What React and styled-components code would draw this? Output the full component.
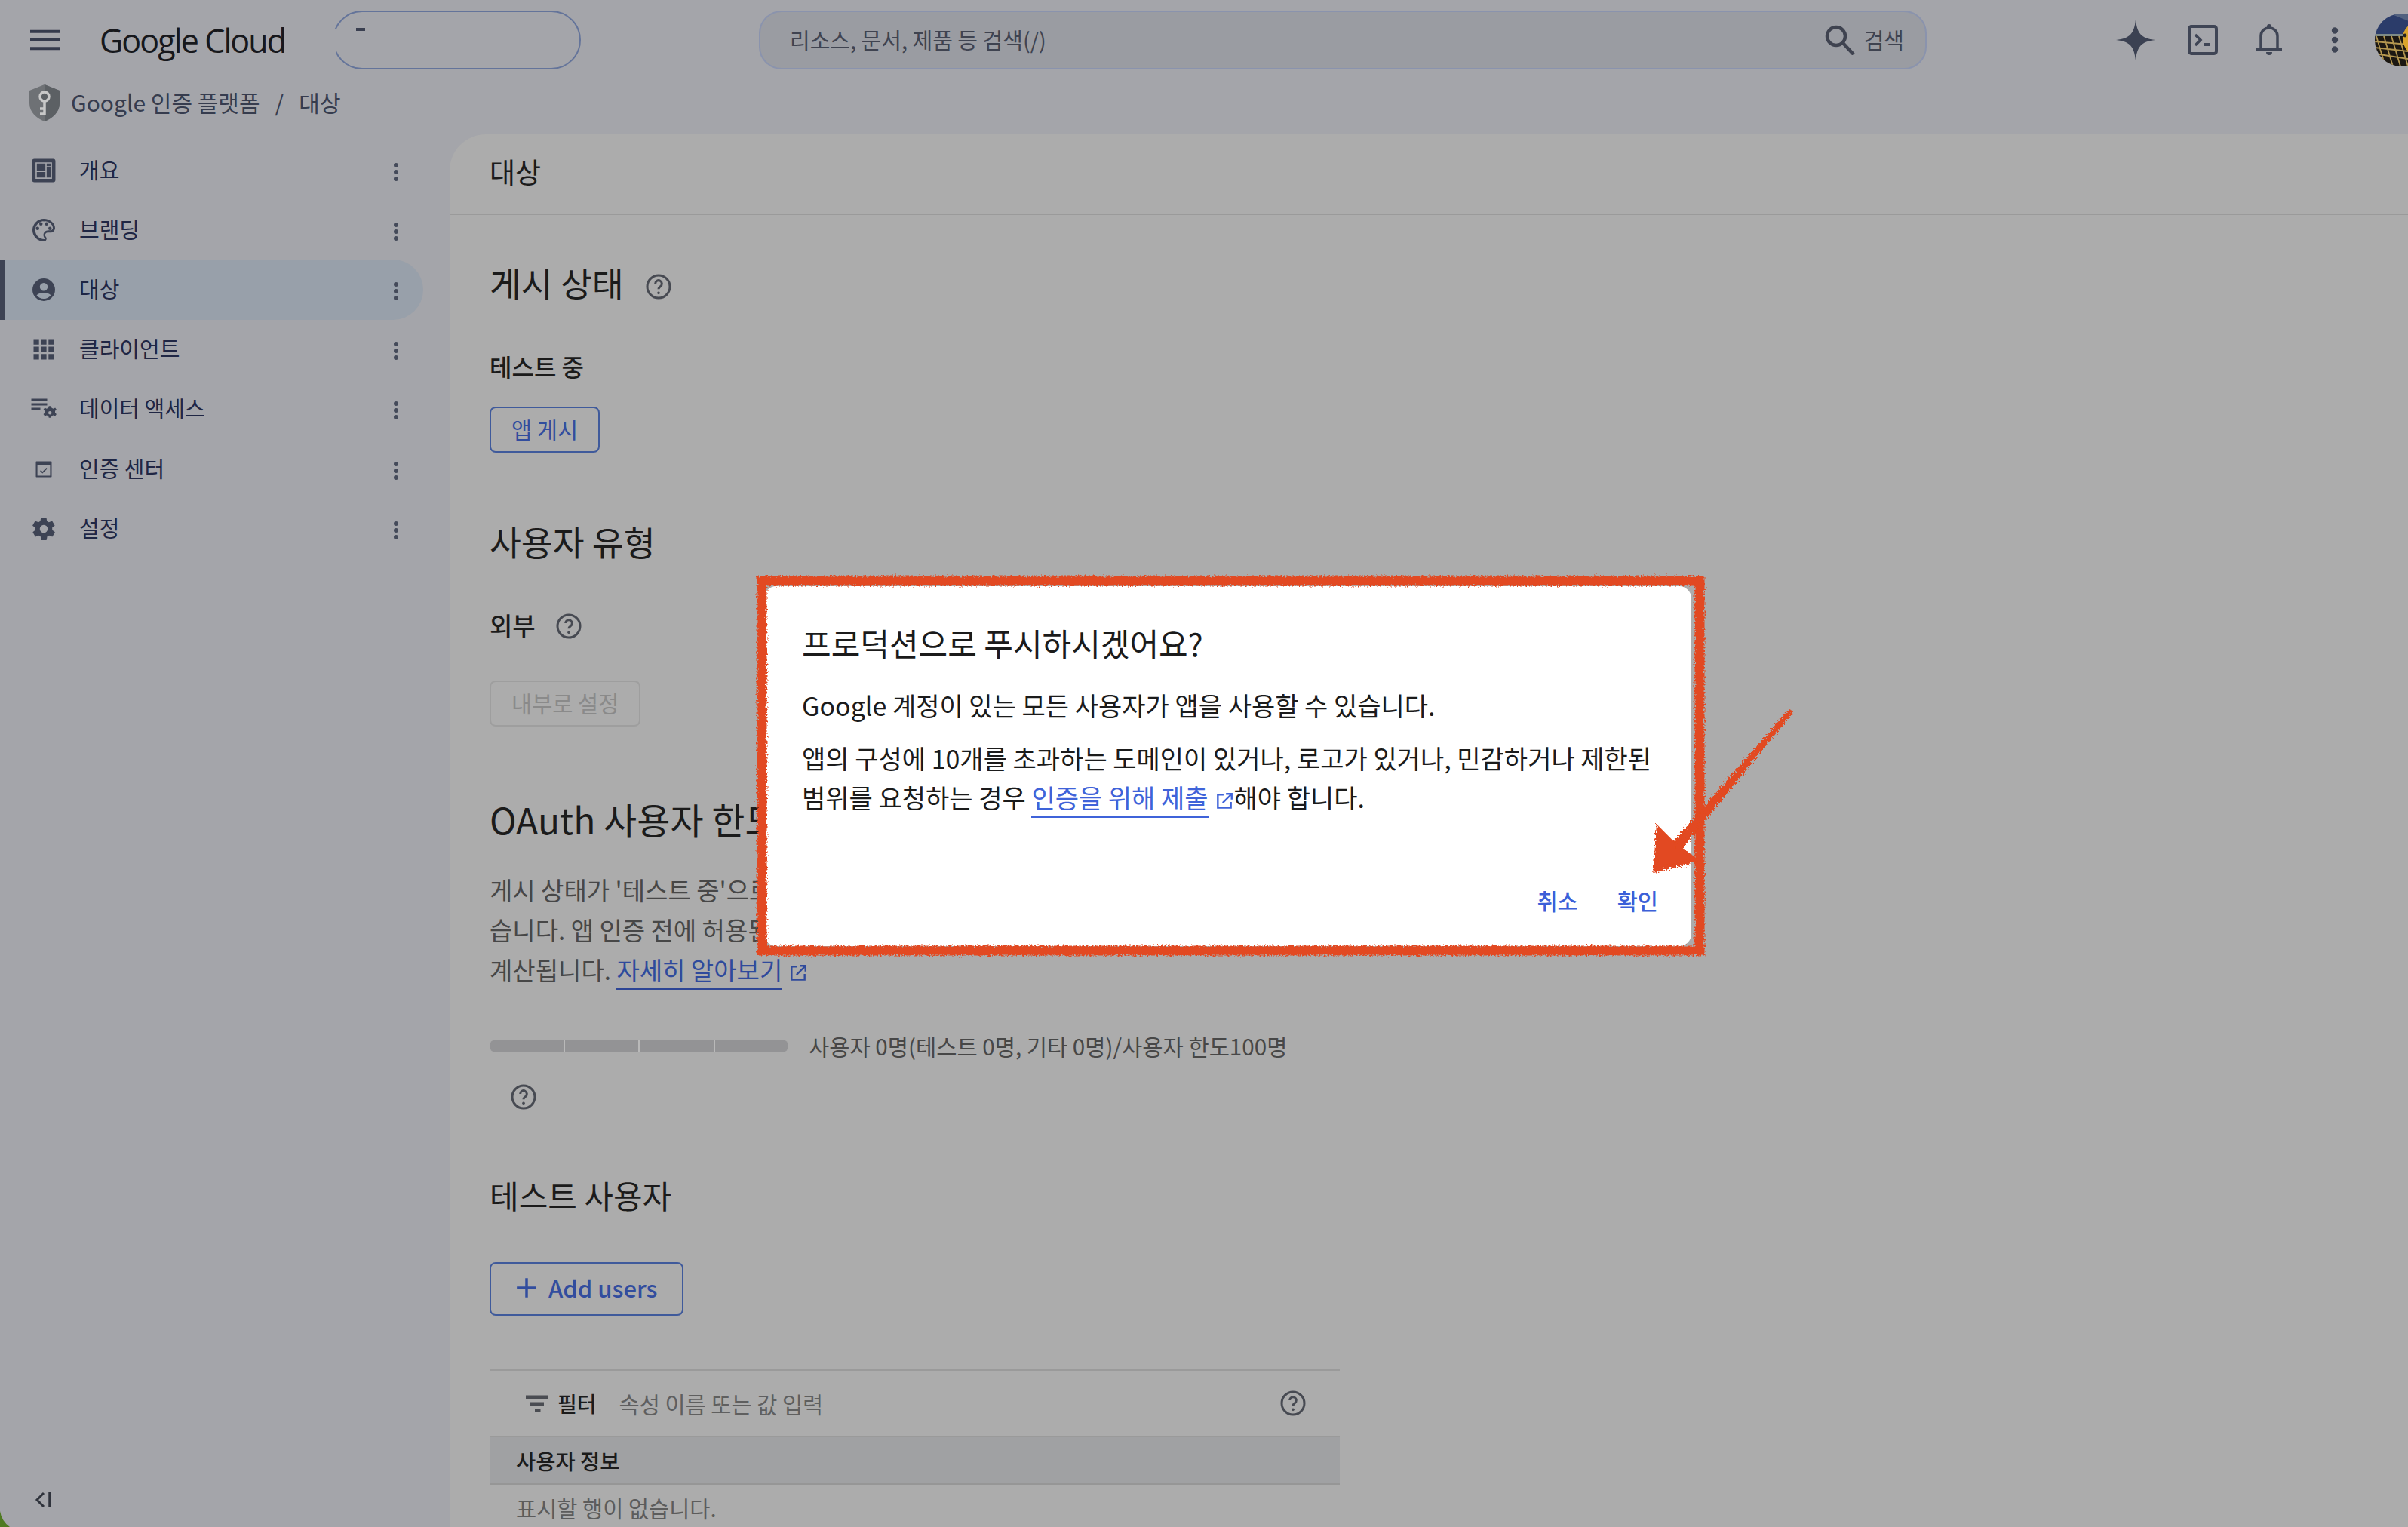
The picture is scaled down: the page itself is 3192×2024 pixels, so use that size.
import React from 'react'
import styled, { createGlobalStyle } from 'styled-components'

const GlobalStyle = createGlobalStyle`
    html, body {
        margin: 0;
        padding: 0;
        background: #a4a5aa;
    }
    body {
        font-family: "Noto Sans CJK KR", "Noto Sans", sans-serif;
        overflow: hidden;
    }
`

const Page = styled.div`
    position: relative;
    width: 3192px;
    height: 2024px;
    overflow: hidden;
    background: #a4a5aa;
    display: flex;
    flex-direction: column;
`

const TopBar = styled.header`
    display: flex;
    align-items: center;
    height: 106px;
    flex-shrink: 0;
    padding-left: 40px;
    & > * {
        flex-shrink: 0;
    }
`

const Logo = styled.div`
    margin-left: 52px;
    width: 309px;
    font-family: "Open Sans", sans-serif;
    font-size: 43px;
    letter-spacing: -1.9px;
    color: #17181c;
`

const ProjectPill = styled.div`
    position: relative;
    width: 329px;
    height: 78px;
    box-sizing: border-box;
    border: 2px solid #64749a;
    border-radius: 39px;
    &::before {
        content: '';
        position: absolute;
        left: 29px;
        top: 21px;
        width: 12px;
        height: 4px;
        background: #3a3f50;
    }
    &::after {
        content: '';
        position: absolute;
        left: -3px;
        top: 23px;
        width: 5px;
        height: 34px;
        background: #a4a5aa;
    }
`

const SearchBox = styled.div`
    margin-left: 236px;
    width: 1548px;
    height: 78px;
    box-sizing: border-box;
    display: flex;
    align-items: center;
    border: 2px solid #8a93ad;
    border-radius: 30px;
    background: #9a9ca2;
    padding: 0 28px 0 39px;
    color: #3f4350;
    font-size: 29px;
`

const SearchHint = styled.span`
    flex: 1;
    margin-top: -3px;
`

const SearchLabel = styled.span`
    margin: -3px 0 0 12px;
`

const TopIcons = styled.div`
    display: flex;
    align-items: center;
    margin-left: 251px;
    & > * {
        flex-shrink: 0;
    }
`

const TopIcon = styled.span`
    display: flex;
    margin-left: ${p => p.$left}px;
`

const Avatar = styled.svg`
    width: 70px;
    height: 70px;
    margin-left: 28px;
`

const Crumbs = styled.div`
    display: flex;
    align-items: center;
    height: 66px;
    margin-top: -3px;
    padding-left: 39px;
    color: #363c4e;
    font-size: 30px;
`

const CrumbLink = styled.span`
    margin: -2px 0 0 15px;
`

const CrumbSlash = styled.span`
    margin: -2px 20px 0;
`

const CrumbCurrent = styled.span`
    margin-top: -2px;
`

const Body = styled.div`
    display: flex;
    flex: 1;
    min-height: 0;
    margin-top: 9px;
`

const SideNav = styled.nav`
    position: relative;
    width: 596px;
    flex-shrink: 0;
    padding-top: 8px;
`

const NavRow = styled.div`
    display: flex;
    align-items: center;
    width: 561px;
    height: 79.2px;
    box-sizing: border-box;
    padding-left: 40px;
    color: #1f2644;
    font-size: 29px;
    border-radius: 0 40px 40px 0;
    ${p => p.$active && `
        background: #98a0aa;
        border-left: 6px solid #3d4354;
        padding-left: 34px;
    `}
`

const NavIcon = styled.span`
    display: flex;
    justify-content: center;
    align-items: center;
    width: 36px;
    height: 40px;
    margin-right: 29px;
`

const NavLabel = styled.span`
    flex: 1;
    margin-top: -4px;
`

const NavMore = styled.span`
    display: flex;
    margin: 4px 18px 0 0;
`

const Collapse = styled.div`
    position: absolute;
    left: 46px;
    bottom: 24px;
    display: flex;
`

const CornerLeaf = styled.svg`
    position: absolute;
    left: 0;
    bottom: 0;
    width: 13px;
    height: 21px;
`

const Panel = styled.main`
    flex: 1;
    background: #acacac;
    border-top-left-radius: 48px;
    min-width: 0;
    overflow: hidden;
`

const PanelHead = styled.div`
    height: 107px;
    box-sizing: border-box;
    border-bottom: 2px solid #9a9a9a;
    padding: 26px 0 0 53px;
    font-size: 37px;
    line-height: 46px;
    color: #1b1b1b;
`

const PanelBody = styled.div`
    padding: 59px 0 0 53px;
    width: 1127px;
`

const Section = styled.section`
    margin-bottom: ${p => p.$gap || 0}px;
`

const Heading = styled.h2`
    display: flex;
    align-items: center;
    gap: 26px;
    margin: 0;
    height: 60px;
    font-size: ${p => p.$size || 45.5}px;
    font-weight: 400;
    color: #1b1b1b;
`

const Status = styled.div`
    display: flex;
    align-items: center;
    gap: 24px;
    margin-top: ${p => p.$top}px;
    height: 44px;
    font-size: ${p => p.$size || 32}px;
    font-weight: 500;
    color: #1b1b1b;
`

const OutlineButton = styled.div`
    display: inline-flex;
    align-items: center;
    gap: ${p => p.$gap || 12}px;
    box-sizing: border-box;
    height: ${p => p.$h || 61}px;
    margin-top: ${p => p.$top || 0}px;
    padding: 0 ${p => p.$pad || 27}px 4px;
    border: 2px solid ${p => (p.$off ? '#9e9e9e' : '#3f5a9b')};
    border-radius: 8px;
    font-size: ${p => p.$size || 29.5}px;
    font-weight: ${p => p.$weight || 400};
    color: ${p => (p.$off ? '#8a8a8a' : '#324d9e')};
`

const Paragraph = styled.p`
    margin: 38px 0 0;
    width: 1400px;
    font-size: 33px;
    line-height: 53px;
    color: #474747;
    white-space: nowrap;
`

const DimLink = styled.span`
    color: #2f4a9c;
    border-bottom: 2px solid #2d4595;
    padding-bottom: 1px;
`

const LinkIcon = styled.svg`
    width: 26px;
    height: 26px;
    margin-left: 8px;
    vertical-align: -4px;
`

const Usage = styled.div`
    display: flex;
    align-items: center;
    gap: 27px;
    margin-top: 54px;
    font-size: 29.6px;
    height: 40px;
    color: #474747;
`

const Bar = styled.div`
    display: flex;
    gap: 2px;
    width: 396px;
    height: 17px;
    border-radius: 8px;
    overflow: hidden;
    background: #b9b9b9;
`

const BarPart = styled.div`
    flex: 1;
    background: #939395;
`

const UsageHelp = styled.div`
    display: flex;
    margin: 28px 0 0 25px;
`

const FilterBar = styled.div`
    display: flex;
    align-items: center;
    height: 90px;
    box-sizing: border-box;
    margin-top: 71px;
    border-top: 2px solid #9a9a9a;
    border-bottom: 2px solid #9a9a9a;
    padding: 0 42px 0 45px;
    font-size: 29.5px;
    color: #5f5f5f;
`

const FilterLabel = styled.span`
    margin: 0 30px 0 9px;
    font-size: 28px;
    font-weight: 500;
    color: #1b1b1b;
`

const FilterHint = styled.span`
    flex: 1;
`

const TableHead = styled.div`
    display: flex;
    align-items: center;
    height: 63px;
    box-sizing: border-box;
    padding-left: 35px;
    background: #a0a1a3;
    border-bottom: 2px solid #969696;
    font-size: 28.5px;
    font-weight: 500;
    color: #1b1b1b;
`

const EmptyRow = styled.div`
    padding: 10px 0 0 35px;
    font-size: 29.5px;
    line-height: 40px;
    color: #5c5c5c;
`

const Dialog = styled.div`
    position: absolute;
    left: 1013px;
    top: 777px;
    width: 1229px;
    height: 477px;
    box-sizing: border-box;
    padding: 48px 50px 0;
    background: #fff;
    border-radius: 16px;
    color: #1b1b1b;
`

const DialogTitle = styled.h3`
    margin: 0;
    font-size: 42px;
    font-weight: 400;
    line-height: 54px;
`

const DialogText = styled.p`
    margin: ${p => p.$top}px 0 0;
    font-size: 34px;
    line-height: 52px;
    white-space: nowrap;
`

const DialogLink = styled.span`
    color: #3f63d9;
    border-bottom: 2px solid #3f63d9;
    padding-bottom: 1px;
`

const DialogActions = styled.div`
    position: absolute;
    right: 44px;
    bottom: 40px;
    display: flex;
    gap: 52px;
    font-size: 29.5px;
    font-weight: 500;
    color: #3c5fd8;
`

const Markup = styled.svg`
    position: absolute;
    left: 0;
    top: 0;
    width: 3192px;
    height: 2024px;
    pointer-events: none;
`

const Glyph = ({ size = 36, color = '#3d4354', children }) => (
    <svg width={size} height={size} viewBox="0 0 24 24" fill={color}>{children}</svg>
)

const MoreDots = ({ color = '#444a5a', size = 36 }) => (
    <Glyph size={size} color={color}>
        <circle cx="12" cy="6" r="2" /><circle cx="12" cy="12" r="2" /><circle cx="12" cy="18" r="2" />
    </Glyph>
)

const HelpIcon = styled.svg`
    width: 40px;
    height: 40px;
    flex-shrink: 0;
    margin-top: ${p => p.$drop || 0}px;
`

const Help = ({ color = '#474a52', drop }) => (
    <HelpIcon $drop={drop} viewBox="0 0 24 24" fill="none">
        <circle cx="12" cy="12" r="9" stroke={color} strokeWidth="1.8" />
        <path d="M9.4 9.6a2.6 2.6 0 1 1 4 2.2c-.9.6-1.4 1-1.4 2.2" stroke={color} strokeWidth="1.8" />
        <circle cx="12" cy="17" r="1.1" fill={color} />
    </HelpIcon>
)

const navItems = [
    {
        label: '개요',
        icon: (
            <g>
                <rect x="1.700" y="1.700" width="20.600" height="20.600" rx="2" />
                <path d="M5.300 5.300h13.400v13.400H5.300zM14 5.300v13.400M5.300 12.800H14M14 8.700h4.700" fill="none" stroke="#a4a5aa" strokeWidth="1.100" />
            </g>
        ),
    },
    { label: '브랜딩', size: 40, icon: <path fillRule="evenodd" d="M12 2C6.500 2 2 6.500 2 12s4.500 10 10 10c1.400 0 2.500-1.100 2.500-2.500 0-.6-.2-1.200-.7-1.700-.4-.4-.6-1-.6-1.500 0-1.200 1-2.200 2.200-2.200H18c2.200 0 4-1.800 4-4C22 5.800 17.500 2 12 2zm0 2c4.400 0 8 3 8 6.100 0 1.100-.9 2-2 2h-2.100c-2.300 0-4.200 1.900-4.200 4.200 0 1 .4 2 1 2.700.2.200.3.400.3.500 0 .3-.2.500-.5.500-4.400 0-8-3.600-8-8s3.600-8 8-8zM6.500 12a1.500 1.500 0 1 0 0-3 1.500 1.500 0 0 0 0 3zm3-4a1.500 1.500 0 1 0 0-3 1.500 1.500 0 0 0 0 3zm5 0a1.500 1.500 0 1 0 0-3 1.500 1.500 0 0 0 0 3zm3 4a1.500 1.500 0 1 0 0-3 1.500 1.500 0 0 0 0 3z" /> },
    { label: '대상', active: true, icon: <path fillRule="evenodd" d="M12 2a10 10 0 1 0 0 20 10 10 0 0 0 0-20zm0 4a3.500 3.500 0 1 1 0 7 3.500 3.500 0 0 1 0-7zm0 14c-2.600 0-4.900-1.300-6.300-3.200C7.400 15.400 9.600 14.700 12 14.700s4.600.7 6.300 2.100A7.900 7.900 0 0 1 12 20z" /> },
    { label: '클라이언트', icon: <path d="M3 3h4.800v4.800H3zm6.600 0h4.800v4.800H9.600zm6.600 0H21v4.800h-4.800zM3 9.600h4.800v4.800H3zm6.600 0h4.800v4.800H9.600zm6.600 0H21v4.800h-4.800zM3 16.200h4.800V21H3zm6.600 0h4.800V21H9.600zm6.600 0H21V21h-4.800z" /> },
    { label: '데이터 액세스', icon: <g><path d="M1 3h14v2H1zm0 4h14v2H1zm0 4h8v2H1z" /><path fillRule="evenodd" d="M18.500 9.500l.5 1.700 1.500.6 1.600-.8 1.200 1.700-1.300 1.200v1.600l1.300 1.200-1.200 1.700-1.600-.8-1.500.6-.5 1.700h-2l-.5-1.700-1.500-.6-1.600.8-1.200-1.700 1.300-1.200v-1.600l-1.300-1.200 1.200-1.700 1.600.8 1.500-.6.5-1.700h2zm-1 4.500a1.500 1.500 0 1 0 0 3 1.500 1.500 0 0 0 0-3z" /></g> },
    { label: '인증 센터', icon: <path fillRule="evenodd" d="M5.500 5h13c.3 0 .5.200.5.500v13c0 .3-.2.500-.5.500h-13c-.3 0-.5-.2-.5-.5v-13c0-.3.200-.5.500-.5zm.9 3v9.600h11.200V8H6.400zm4.500 7.700L8.700 13.500l.8-.8 1.400 1.400 3.400-3.400.8.800-4.200 4.200z" /> },
    { label: '설정', size: 38, icon: <path fillRule="evenodd" d="M19.400 13c.1-.3.1-.7.1-1s0-.7-.1-1l2.100-1.600c.2-.2.2-.4.100-.6l-2-3.500c-.1-.2-.4-.3-.6-.2l-2.500 1c-.5-.4-1.100-.7-1.700-1l-.4-2.600c0-.3-.2-.5-.5-.5h-4c-.3 0-.5.200-.5.500l-.4 2.600c-.6.300-1.200.6-1.700 1l-2.500-1c-.2-.1-.5 0-.6.200l-2 3.500c-.1.200-.1.400.1.600L4.600 11c0 .3-.1.700-.1 1s0 .7.1 1l-2.100 1.600c-.2.200-.2.400-.1.600l2 3.500c.1.200.4.300.6.200l2.500-1c.5.400 1.100.7 1.700 1l.4 2.600c0 .3.2.5.5.5h4c.3 0 .5-.2.5-.5l.4-2.600c.6-.3 1.200-.6 1.700-1l2.500 1c.2.100.5 0 .6-.2l2-3.500c.1-.2.1-.4-.1-.6L19.400 13zM12 15.500a3.500 3.500 0 1 1 0-7 3.500 3.500 0 0 1 0 7z" /> },
]

const ExternalIcon = ({ color }) => (
    <LinkIcon viewBox="0 0 24 24" fill="none" stroke={color} strokeWidth="2.200">
        <path d="M11 4H4v16h16v-7M14 3h7v7M21 3L10 14" />
    </LinkIcon>
)

const App = () => (
    <Page>
        <GlobalStyle />
        <TopBar>
            <Glyph size={40} color="#343a4c"><path d="M0 4h24v2.500H0zm0 6.700h24v2.500H0zm0 6.800h24V20H0z" /></Glyph>
            <Logo>Google Cloud</Logo>
            <ProjectPill />
            <SearchBox>
                <SearchHint>리소스, 문서, 제품 등 검색(/)</SearchHint>
                <svg width="40" height="40" viewBox="0 0 40 40" fill="none" stroke="#3f4350" strokeWidth="4.500">
                    <circle cx="15" cy="15" r="12" /><path d="M24 24l14 15" />
                </svg>
                <SearchLabel>검색</SearchLabel>
            </SearchBox>
            <TopIcons>
                <svg width="52" height="54" viewBox="0 0 52 54" fill="#3b4152">
                    <path d="M26 0C28 18 33 25 52 27C33 29 28 36 26 54C24 36 19 29 0 27C19 25 24 18 26 0Z" />
                </svg>
                <TopIcon $left={43}>
                    <svg width="40" height="40" viewBox="0 0 40 40" fill="none">
                        <rect x="2" y="2" width="36" height="36" rx="3" stroke="#3f4555" strokeWidth="4" />
                        <path d="M10 13l7 7-7 7" stroke="#3f4555" strokeWidth="3.500" />
                        <rect x="21" y="24" width="9" height="4" fill="#3f4555" />
                    </svg>
                </TopIcon>
                <TopIcon $left={50}>
                    <svg width="36" height="44" viewBox="0 0 36 44" fill="none">
                        <path d="M7 33V17C7 10 12 6 18 6s11 4 11 11v16" stroke="#3f4555" strokeWidth="3.500" />
                        <path d="M1 32h34v4H1zM15 4a3 3 0 0 1 6 0v3h-6zM14 38h8a4 4 0 0 1-8 0z" fill="#3f4555" />
                    </svg>
                </TopIcon>
                <TopIcon $left={44}><MoreDots color="#3f4555" size={50} /></TopIcon>
                <Avatar viewBox="0 0 70 70">
                    <defs><clipPath id="avatar"><circle cx="35" cy="35" r="35" /></clipPath></defs>
                    <g clipPath="url(#avatar)">
                        <rect width="70" height="32" fill="#2b3c6a" />
                        <path d="M20 0L70 20V0Z" fill="#52617f" />
                        <rect y="27" width="70" height="3" fill="#7d8a86" />
                        <rect y="30" width="70" height="40" fill="#1b1712" />
                        <path d="M0 37L44 41M0 45L44 50M0 53L44 60M2 30L14 70M12 30L24 70M22 30L34 70M32 30L44 70" stroke="#b3964f" strokeWidth="1.800" />
                        <path d="M50 12C42 16 36 26 37 34C38 46 46 56 60 58H70V12Z" fill="#d9a42c" />
                        <circle cx="40" cy="29" r="2.400" fill="#232323" />
                    </g>
                </Avatar>
            </TopIcons>
        </TopBar>
        <Crumbs>
            <svg width="40" height="49" viewBox="0 0 40 49">
                <path d="M20 0L40 8V25C40 37 30 45 20 49C10 45 0 37 0 25V8Z" fill="#6e7175" />
                <path d="M20 0L40 8V25C40 37 30 45 20 49Z" fill="#5c6064" />
                <circle cx="20" cy="16" r="6" fill="#5c6064" stroke="#c8c8c8" strokeWidth="3.500" />
                <path d="M20 22V41M20 32h-6M20 39h-6" stroke="#c8c8c8" strokeWidth="3.500" fill="none" />
            </svg>
            <CrumbLink>Google 인증 플랫폼</CrumbLink>
            <CrumbSlash>/</CrumbSlash>
            <CrumbCurrent>대상</CrumbCurrent>
        </Crumbs>
        <Body>
            <SideNav>
                {navItems.map(item => (
                    <NavRow key={item.label} $active={item.active}>
                        <NavIcon><Glyph size={item.size}>{item.icon}</Glyph></NavIcon>
                        <NavLabel>{item.label}</NavLabel>
                        <NavMore><MoreDots /></NavMore>
                    </NavRow>
                ))}
                <Collapse>
                    <Glyph size={24} color="none">
                        <path d="M12 3l-9 9 9 9" stroke="#2f333c" strokeWidth="3" /><path d="M20 2v20" stroke="#2f333c" strokeWidth="3.500" />
                    </Glyph>
                </Collapse>
                <CornerLeaf viewBox="0 0 13 21"><path d="M0 0Q2 13 13 21H0Z" fill="#4f7a22" /></CornerLeaf>
            </SideNav>
            <Panel>
                <PanelHead>대상</PanelHead>
                <PanelBody>
                    <Section $gap={87}>
                        <Heading>게시 상태 <Help drop={12} /></Heading>
                        <Status $top={59}>테스트 중</Status>
                        <OutlineButton $top={32}>앱 게시</OutlineButton>
                    </Section>
                    <Section $gap={92}>
                        <Heading>사용자 유형</Heading>
                        <Status $top={59} $size={33}>외부 <Help drop={4} /></Status>
                        <OutlineButton $top={52} $off>내부로 설정</OutlineButton>
                    </Section>
                    <Section $gap={79}>
                        <Heading $size={48}>OAuth 사용자 한도</Heading>
                        <Paragraph>
                            게시 상태가 '테스트 중'으로 설정된 동안에는 테스트 사용자만 앱에 액세스할 수 있<br />
                            습니다. 앱 인증 전에 허용된 사용자 수는 100명으로 제한되며 이 한도는 앱 전체 기간에<br />
                            계산됩니다. <DimLink>자세히 알아보기</DimLink><ExternalIcon color="#2f4a9c" />
                        </Paragraph>
                        <Usage>
                            <Bar><BarPart /><BarPart /><BarPart /><BarPart /></Bar>
                            사용자 0명(테스트 0명, 기타 0명)/사용자 한도100명
                        </Usage>
                        <UsageHelp><Help /></UsageHelp>
                    </Section>
                    <Section>
                        <Heading $size={42}>테스트 사용자</Heading>
                        <OutlineButton $top={60} $h={71} $pad={33} $gap={15} $size={31} $weight={500}>
                            <Glyph size={28} color="#324d9e"><path d="M10.500 1h3v9.500H23v3h-9.500V23h-3v-9.500H1v-3h9.500z" /></Glyph>
                            Add users
                        </OutlineButton>
                        <FilterBar>
                            <Glyph size={36} color="#4a4c52"><path d="M2 5h20v3H2zm4 6h12v3H6zm4 6h5v3h-5z" /></Glyph>
                            <FilterLabel>필터</FilterLabel>
                            <FilterHint>속성 이름 또는 값 입력</FilterHint>
                            <Help />
                        </FilterBar>
                        <TableHead>사용자 정보</TableHead>
                        <EmptyRow>표시할 행이 없습니다.</EmptyRow>
                    </Section>
                </PanelBody>
            </Panel>
        </Body>
        <Dialog>
            <DialogTitle>프로덕션으로 푸시하시겠어요?</DialogTitle>
            <DialogText $top={30}>Google 계정이 있는 모든 사용자가 앱을 사용할 수 있습니다.</DialogText>
            <DialogText $top={18}>
                앱의 구성에 10개를 초과하는 도메인이 있거나, 로고가 있거나, 민감하거나 제한된<br />
                범위를 요청하는 경우 <DialogLink>인증을 위해 제출</DialogLink><ExternalIcon color="#3f63d9" />해야 합니다.
            </DialogText>
            <DialogActions>
                <span>취소</span>
                <span>확인</span>
            </DialogActions>
        </Dialog>
        <Markup viewBox="0 0 3192 2024">
            <defs>
                <filter id="rough" x="-5%" y="-5%" width="110%" height="110%">
                    <feTurbulence type="fractalNoise" baseFrequency="0.45" numOctaves="2" seed="4" />
                    <feDisplacementMap in="SourceGraphic" scale="8" />
                </filter>
            </defs>
            <g filter="url(#rough)" fill="none" stroke="#e24a20">
                <rect x="1010" y="770" width="1243" height="490" strokeWidth="13" />
                <path d="M2376 944L2372 941L2214 1122L2224 1130Z" fill="#e24a20" strokeWidth="2" />
                <path d="M2198 1098L2194 1154L2248 1140L2218 1118Z" fill="#e24a20" strokeWidth="5" />
            </g>
        </Markup>
    </Page>
)

export default App
